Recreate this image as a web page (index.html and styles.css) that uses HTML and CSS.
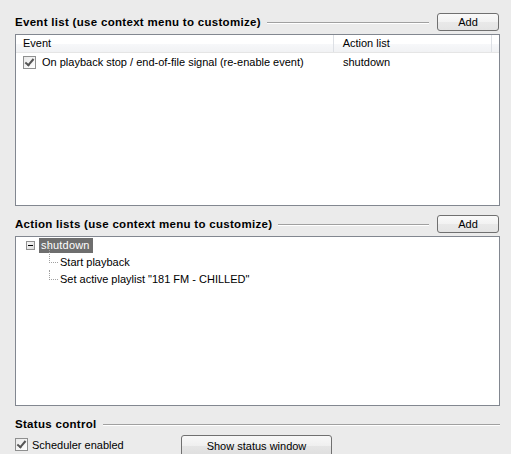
FILE: index.html
```html
<!DOCTYPE html>
<html>
<head>
<meta charset="utf-8">
<link rel="stylesheet" href="styles.css">
</head>
<body>
<div class="page">
  <div class="group-head">
    <span class="group-title">Event list (use context menu to customize)</span>
    <span class="rule"></span>
    <button class="btn btn-add">Add</button>
  </div>
  <div class="listview events">
    <div class="lv-header">
      <div class="col col-event">Event</div>
      <div class="col col-action">Action list</div>
      <div class="col col-rest"></div>
    </div>
    <div class="lv-row">
      <div class="cell cell-event"><span class="check checked"></span><span>On playback stop / end-of-file signal (re-enable event)</span></div>
      <div class="cell cell-action">shutdown</div>
    </div>
  </div>

  <div class="group-head second">
    <span class="group-title">Action lists (use context menu to customize)</span>
    <span class="rule"></span>
    <button class="btn btn-add">Add</button>
  </div>
  <div class="listview tree">
    <div class="tree-node">
      <span class="expander"><span class="minus"></span></span>
      <span class="node-label selected">shutdown</span>
    </div>
    <div class="tree-children">
      <div class="tree-child"><span class="branch"></span>Start playback</div>
      <div class="tree-child last"><span class="branch"></span>Set active playlist "181 FM - CHILLED"</div>
    </div>
  </div>

  <div class="group-head third">
    <span class="group-title">Status control</span>
    <span class="rule"></span>
  </div>
  <div class="status-row">
    <label class="chk-label"><span class="check checked"></span>Scheduler enabled</label>
    <button class="btn btn-status">Show status window</button>
  </div>
</div>
</body>
</html>
```
FILE: styles.css
```css
html, body {
  margin: 0;
  padding: 0;
  background: #ebebeb;
  overflow: hidden;
}
body {
  font-family: "Liberation Sans", Arial, sans-serif;
  font-size: 11px;
  color: #000;
  width: 511px;
  height: 454px;
}
.page {
  padding: 13px 11px 0 15px;
  display: flex;
  flex-direction: column;
}
.group-head {
  display: flex;
  align-items: center;
  height: 18px;
}
.group-head.second { margin-top: 9px; }
.group-head.third { margin-top: 8px; height: 20px; }
.group-title {
  font-weight: bold;
  font-size: 11.5px;
  letter-spacing: 0.3px;
  white-space: nowrap;
}
.rule {
  flex: 1;
  height: 0;
  border-top: 1px solid #a0a0a0;
  border-bottom: 1px solid #fff;
  margin: 1px 8px 0 6px;
}
.group-head.third .rule { margin-right: 0; }
.btn {
  font-family: inherit;
  font-size: 11px;
  color: #000;
  border: 1px solid #707070;
  border-radius: 3px;
  padding: 0;
  margin: 0;
}
.btn-add {
  width: 62px;
  height: 18px;
  margin-right: 1px;
  background: linear-gradient(#fafafa, #f2f2f2 50%, #e9e9e9 51%, #e4e4e4);
}
.listview {
  background: #fff;
  border: 1px solid #828790;
  margin-top: 3px;
}
.events { height: 170px; }
.lv-header {
  display: flex;
  height: 17px;
  border-bottom: 1px solid #e5e5e5;
  background: linear-gradient(#ffffff, #ffffff 50%, #f7f8fa 51%, #f1f2f4);
}
.col {
  line-height: 17px;
  padding-left: 7px;
  box-sizing: border-box;
}
.col-event {
  width: 321px;
  border-right: 1px solid #dde0e5;
}
.col-action {
  width: 160px;
  padding-left: 9px;
  border-right: 1px solid #dde0e5;
}
.col-rest { flex: 1; }
.lv-row {
  display: flex;
  height: 18px;
  align-items: center;
}
.cell-event {
  width: 321px;
  display: flex;
  align-items: center;
  padding-left: 7px;
  box-sizing: border-box;
}
.cell-action {
  padding-left: 6px;
}
.check {
  display: inline-block;
  width: 11px;
  height: 11px;
  border: 1px solid #8e8f8f;
  background: linear-gradient(135deg, #e9e9e9, #ffffff);
  position: relative;
  margin-right: 6px;
  flex: none;
}
.check.checked::after {
  content: "";
  position: absolute;
  left: 3px;
  top: 0px;
  width: 3px;
  height: 7px;
  border: solid #555;
  border-width: 0 2px 2px 0;
  transform: rotate(40deg);
}
.tree {
  height: 167px;
  padding-top: 1px;
}
.tree-node {
  display: flex;
  align-items: center;
  height: 15px;
  padding-left: 10px;
}
.expander {
  width: 9px;
  height: 9px;
  box-sizing: border-box;
  border: 1px solid #919191;
  background: linear-gradient(135deg, #f7f7f7, #dcdcdc);
  position: relative;
  margin-right: 4px;
}
.minus {
  position: absolute;
  left: 1px;
  top: 3px;
  width: 5px;
  height: 1px;
  background: #000;
}
.node-label {
  padding: 0 3px 0 2px;
  line-height: 15px;
  letter-spacing: 0.2px;
}
.selected {
  background: #6e6e6e;
  color: #fff;
}
.tree-children {
  padding-left: 33px;
  padding-top: 1px;
}
.tree-child {
  height: 17px;
  line-height: 17px;
  display: flex;
  align-items: center;
}
.branch {
  width: 8px;
  height: 9px;
  margin-top: -9px;
  border-left: 1px dotted #a0a0a0;
  border-bottom: 1px dotted #a0a0a0;
  margin-right: 2px;
  flex: none;
}
.tree-child:first-child .branch {
  height: 17px;
  margin-top: -17px;
}
.status-row {
  display: flex;
  align-items: flex-start;
  margin-top: 1px;
}
.chk-label {
  display: flex;
  align-items: center;
  width: 166px;
  margin-top: 3px;
}
.chk-label .check { margin-right: 4px; }
.btn-status {
  width: 151px;
  height: 22px;
  background: linear-gradient(#f8f8f8, #efefef 50%, #e5e5e5 51%, #dedede);
}
```
